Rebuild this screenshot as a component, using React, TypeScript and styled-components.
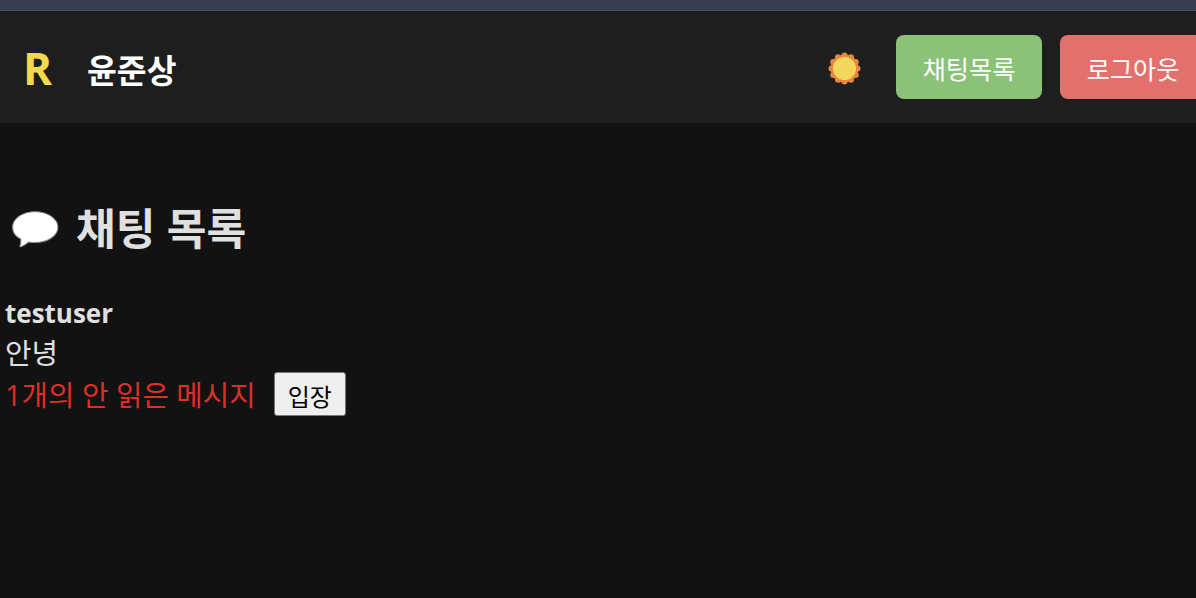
import styled, { createGlobalStyle } from "styled-components";

const GlobalStyle = createGlobalStyle`
  html, body {
    margin: 0;
    padding: 0;
    height: 100%;
    background-color: #121212;
    overflow: hidden;
  }
  body {
    font-family: "Open Sans", "Noto Sans CJK KR", sans-serif;
    color: #e0e0e0;
  }
`;

const lobes = Array.from({ length: 12 }, (_, i) => (i * Math.PI) / 6);

function App() {
  return (
    <Page>
      <GlobalStyle />
      <TopStrip />
      <Header>
        <Brand>
          <Logo>R</Logo>
          <UserName>윤준상</UserName>
        </Brand>
        <Actions>
          <ThemeToggle aria-label="테마 변경">
            <svg width="33" height="33" viewBox="0 0 33 33">
              <circle cx="16.5" cy="16.500" r="14" fill="#e8863e" />
              {lobes.map((a) => (
                <circle
                  key={a}
                  cx={16.5 + Math.sin(a) * 13}
                  cy={16.5 - Math.cos(a) * 13}
                  r="3"
                  fill="#e8863e"
                />
              ))}
              <circle cx="16.5" cy="16.500" r="11.500" fill="#f2d75c" />
            </svg>
          </ThemeToggle>
          <NavButton $color="#8bc277">채팅목록</NavButton>
          <NavButton $color="#e2716e">로그아웃</NavButton>
        </Actions>
      </Header>
      <Main>
        <Title>
          <svg width="50" height="40" viewBox="0 0 48 38">
            <path
              fill="#ffffff"
              stroke="#8a8a8a"
              strokeWidth="1"
              d="M24 2.500c12.500 0 22 6.800 22 14.800S36.500 32 24 32c-2 0-4-.2-6-.6-2 1.800-5 3.800-7.500 4.600-.8.200-1.200-.3-.9-1 .8-1.700 1-4 .8-6.300C5 26 2.500 22 2.500 17.300 2.500 9.300 11.500 2.500 24 2.500z"
            />
          </svg>
          <span>채팅 목록</span>
        </Title>
        <ChatItem>
          <Partner>testuser</Partner>
          <LastMessage>안녕</LastMessage>
          <UnreadRow>
            <Unread>1개의 안 읽은 메시지</Unread>
            <EnterButton>입장</EnterButton>
          </UnreadRow>
        </ChatItem>
      </Main>
    </Page>
  );
}

const Page = styled.div`
  min-height: 598px;
  background-color: #121212;
`;

const TopStrip = styled.div`
  height: 10px;
  background-color: #383d50;
  border-bottom: 1px solid #4a4c5c;
`;

const Header = styled.header`
  height: 112px;
  background-color: #1e1e1e;
  display: flex;
  justify-content: space-between;
  align-items: center;
  padding-left: 23px;
  overflow: hidden;
`;

const Brand = styled.div`
  display: flex;
  align-items: center;
  gap: 35px;
  padding-top: 2px;
`;

const Logo = styled.span`
  font-size: 44px;
  font-weight: 700;
  line-height: 1;
  color: #f2d94e;
`;

const UserName = styled.span`
  font-size: 32.4px;
  font-weight: 700;
  color: #ffffff;
`;

const Actions = styled.div`
  display: flex;
  align-items: center;
  flex-shrink: 0;
  margin-right: -28px;
`;

const ThemeToggle = styled.div`
  display: flex;
  margin: 2px 35px 0 0;
`;

const NavButton = styled.button<{ $color: string }>`
  width: 146px;
  height: 64px;
  margin-right: 18px;
  padding: 2px 0 0;
  border: none;
  border-radius: 8px;
  background-color: ${(p) => p.$color};
  color: #ffffff;
  font-family: inherit;
  font-size: 25.2px;
`;

const Main = styled.main`
  padding: 0 5px;
`;

const Title = styled.h2`
  display: flex;
  align-items: center;
  gap: 16px;
  margin: 0;
  padding: 79px 0 0 5px;
  font-size: 43.2px;
  font-weight: 700;
  line-height: 54px;
  color: #e0e0e0;
`;

const ChatItem = styled.div`
  margin-top: 38px;
  font-size: 28.8px;
  line-height: 39px;
`;

const Partner = styled.div`
  font-size: 26px;
  font-weight: 700;
`;

const LastMessage = styled.div``;

const UnreadRow = styled.div`
  display: flex;
  align-items: center;
  gap: 18px;
`;

const Unread = styled.span`
  color: #dc2f26;
`;

const EnterButton = styled.button`
  width: 72px;
  height: 44px;
  padding: 2px 0 0;
  border: 1px solid #767676;
  border-radius: 3px;
  background-color: #efefef;
  color: #000000;
  font-family: inherit;
  font-size: 24px;
`;

export default App;
